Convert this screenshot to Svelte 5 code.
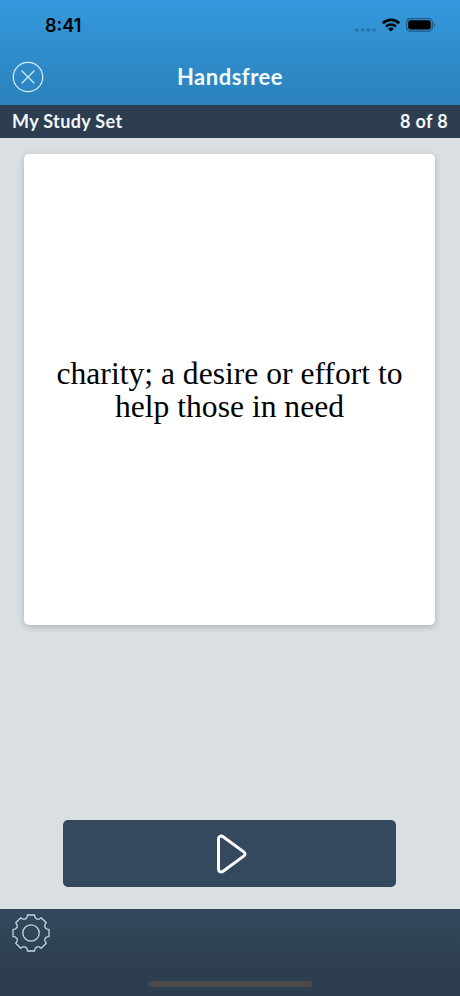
<script>
    const title = "Handsfree";
    const setName = "My Study Set";
    const current = 8;
    const total = 8;
    const lines = ["charity; a desire or effort to", "help those in need"];

    // one tooth of the gear and the dip after it, repeated every 45 degrees
    const tooth = [[-4.4, -15.2], [-3.9, -15.8], [-3.6, -18], [3.6, -18], [3.9, -15.8], [4.4, -15.2], [5.6, -13.9]];

    const gearPoints = [0, 1, 2, 3, 4, 5, 6, 7].flatMap((step) => {
        const a = (step * Math.PI) / 4;
        return tooth.map(([x, y]) => {
            const px = x * Math.cos(a) - y * Math.sin(a);
            const py = x * Math.sin(a) + y * Math.cos(a);
            return `${px.toFixed(2)},${py.toFixed(2)}`;
        });
    }).join(" ");
</script>

<div class="screen">
    <header>
        <div class="status">
            <span class="time">8:41</span>
            <div class="indicators">
                <svg class="signal" width="21" height="4" viewBox="0 0 21 4">
                    <circle cx="2" cy="2" r="1.8" />
                    <circle cx="7.7" cy="2" r="1.8" />
                    <circle cx="13.3" cy="2" r="1.8" />
                    <circle cx="19" cy="2" r="1.8" />
                </svg>
                <svg class="wifi" width="20" height="14" viewBox="0 0 20 14">
                    <path d="M1.8 5.2a11.9 11.9 0 0 1 16.4 0" />
                    <path d="M5 8.5a7.3 7.3 0 0 1 10 0" />
                    <path class="dot" d="M7.2 10.8a4.2 4.2 0 0 1 5.6 0L10 13.6z" />
                </svg>
                <svg class="battery" width="30" height="14" viewBox="0 0 30 14">
                    <rect class="shell" x="0.6" y="0.6" width="25.8" height="12.6" rx="3.8" />
                    <rect x="2.2" y="2.2" width="22.6" height="9.4" rx="2.4" />
                    <path class="cap" d="M27.7 4.8q1.6.7 1.6 2.2t-1.6 2.2z" />
                </svg>
            </div>
        </div>
        <nav>
            <button class="close" aria-label="Close">
                <svg width="32" height="32" viewBox="0 0 32 32">
                    <circle cx="16" cy="16" r="14.7" />
                    <path d="M10 10l12 12M22 10L10 22" />
                </svg>
            </button>
            <h1>{title}</h1>
        </nav>
    </header>

    <div class="set-bar">
        <span>{setName}</span>
        <span class="count">{current} of {total}</span>
    </div>

    <main>
        <div class="card">
            <p>
                {#each lines as line}
                    <span>{line}</span>
                {/each}
            </p>
        </div>
        <button class="play" aria-label="Play">
            <svg width="34" height="42" viewBox="0 0 34 42">
                <path d="M4.5 6v30c0 2.7 2.5 3.9 4.6 2.3l20.6-15.2c1.8-1.3 1.8-2.9 0-4.2L9.1 3.7C7 2.1 4.5 3.3 4.5 6z" />
            </svg>
        </button>
    </main>

    <footer>
        <button class="settings" aria-label="Settings">
            <svg width="38" height="38" viewBox="-19 -19 38 38">
                <polygon points={gearPoints} />
                <circle r="8.2" />
            </svg>
        </button>
        <div class="home-bar"></div>
    </footer>
</div>

<style>
    :global(body) {
        margin: 0;
    }

    .screen {
        display: flex;
        flex-direction: column;
        height: 996px;
        overflow: hidden;
        background: #dadfe2;
        font-family: Lato, "Open Sans", sans-serif;
    }

    button {
        border: 0;
        padding: 0;
        background: none;
        cursor: pointer;
    }

    svg {
        display: block;
        fill: none;
        stroke-linecap: round;
        stroke-linejoin: round;
    }

    header {
        height: 105px;
        background: linear-gradient(#3499dd, #2b81ba);
    }

    .status {
        display: flex;
        justify-content: space-between;
        height: 52px;
        padding: 0 24px 0 45px;
    }

    .time {
        padding-top: 15px;
        font: 600 18px/22px Inter, sans-serif;
        color: #000;
    }

    .indicators {
        display: flex;
        align-items: flex-start;
        padding-top: 18px;
    }

    .signal {
        margin: 10px 5px 0 0;
        fill: #2373a9;
    }

    .wifi {
        margin-right: 5px;
        stroke: #000;
        stroke-width: 2.6;
        stroke-linecap: butt;
    }

    .wifi .dot {
        fill: #000;
        stroke: none;
    }

    .battery {
        fill: #000;
    }

    .battery .shell {
        fill: none;
        stroke: #1d5b87;
        stroke-width: 1.2;
    }

    .battery .cap {
        fill: #1d5b87;
    }

    nav {
        display: grid;
        grid-template-columns: 44px 1fr 44px;
        align-items: center;
        height: 50px;
        padding: 0 12px;
    }

    .close svg {
        stroke: #d3edfb;
        stroke-width: 1.2;
    }

    h1 {
        margin: 0;
        text-align: center;
        font-size: 22px;
        line-height: 26px;
        font-weight: 700;
        letter-spacing: 0.5px;
        color: #f1faff;
    }

    .set-bar {
        display: flex;
        justify-content: space-between;
        height: 33px;
        padding: 0 12px;
        background: #2d3e50;
        color: #f2f8fb;
        font-size: 18px;
        line-height: 32px;
        font-weight: 700;
        letter-spacing: 0.35px;
    }

    main {
        flex: 1;
        display: flex;
        flex-direction: column;
        align-items: center;
        justify-content: space-between;
        padding: 16px 25px 22px 24px;
    }

    .card {
        display: flex;
        align-items: center;
        justify-content: center;
        width: 411px;
        height: 471px;
        border-radius: 5px;
        background: #fff;
        box-shadow: 0 2px 6px rgba(60, 80, 95, 0.3);
    }

    .card p {
        margin: 0;
        padding-top: 1px;
        text-align: center;
        font-family: Georgia, "Liberation Serif", serif;
        font-size: 31.6px;
        line-height: 33px;
        color: #000;
    }

    .card span {
        display: block;
        white-space: nowrap;
    }

    .play {
        display: flex;
        align-items: center;
        justify-content: center;
        width: 333px;
        height: 67px;
        border-radius: 5px;
        background: #34495e;
    }

    .play svg {
        margin-left: 2px;
        stroke: #fff;
        stroke-width: 3;
    }

    footer {
        display: flex;
        flex-direction: column;
        justify-content: space-between;
        height: 87px;
        background: linear-gradient(#34495e, #2d3e50 70%);
    }

    .settings {
        align-self: flex-start;
        margin: 5px 0 0 12px;
    }

    .settings svg {
        stroke: #c3d7e6;
        stroke-width: 1.3;
    }

    .home-bar {
        align-self: center;
        width: 164px;
        height: 6px;
        margin-bottom: 9px;
        border-radius: 3px;
        background: #4a4a4c;
    }
</style>
